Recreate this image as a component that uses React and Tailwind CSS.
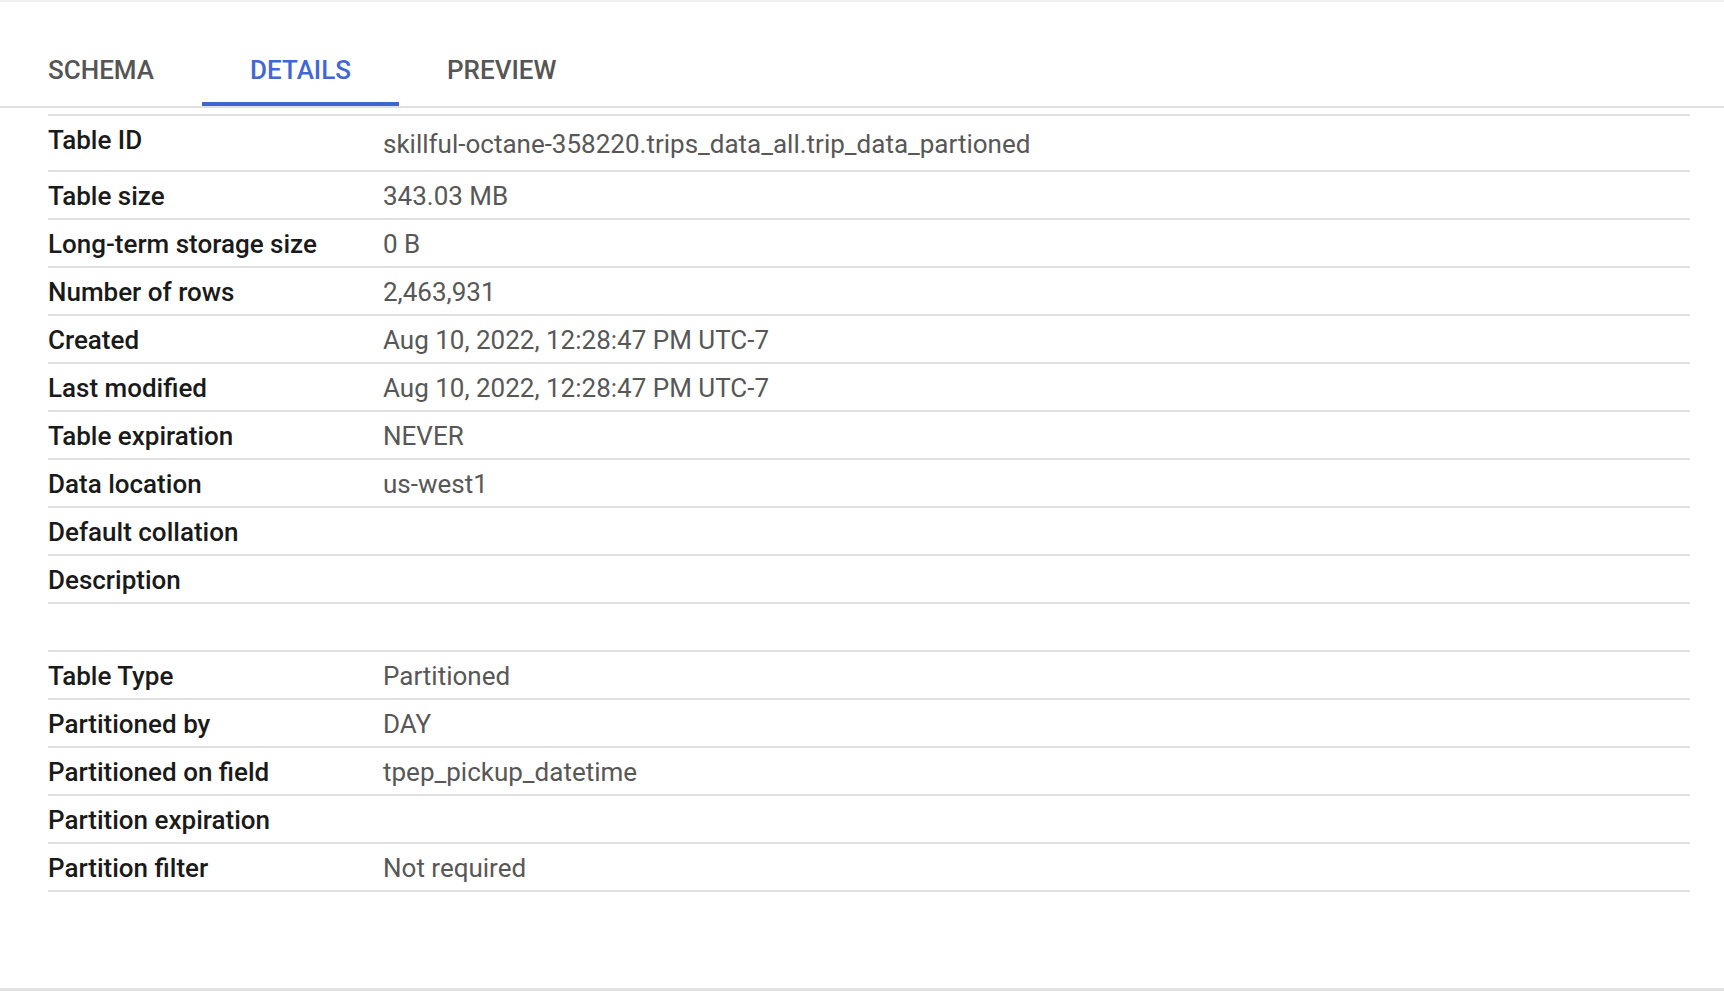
export default function App() {
  const tabs = [
    { label: "SCHEMA", active: false },
    { label: "DETAILS", active: true },
    { label: "PREVIEW", active: false },
  ];

  const rows = [
    { label: "Table ID", value: "skillful-octane-358220.trips_data_all.trip_data_partioned", first: true },
    { label: "Table size", value: "343.03 MB" },
    { label: "Long-term storage size", value: "0 B" },
    { label: "Number of rows", value: "2,463,931" },
    { label: "Created", value: "Aug 10, 2022, 12:28:47 PM UTC-7" },
    { label: "Last modified", value: "Aug 10, 2022, 12:28:47 PM UTC-7" },
    { label: "Table expiration", value: "NEVER" },
    { label: "Data location", value: "us-west1" },
    { label: "Default collation", value: "" },
    { label: "Description", value: "" },
    { label: "", value: "" },
    { label: "Table Type", value: "Partitioned" },
    { label: "Partitioned by", value: "DAY" },
    { label: "Partitioned on field", value: "tpep_pickup_datetime" },
    { label: "Partition expiration", value: "" },
    { label: "Partition filter", value: "Not required" },
  ];

  return (
    <div className="w-[1724px] h-[994px] bg-white font-['Roboto',sans-serif] overflow-hidden flex flex-col">
      <div className="h-[2px] bg-[#efefef]" />

      {/* Tabs */}
      <div className="mt-[32px] flex border-b-2 border-[#e0e0e0]">
        {tabs.map((tab) => (
          <div
            key={tab.label}
            className={`h-[72px] px-[48px] flex items-center justify-center text-[26px] font-medium border-b-4 ${
              tab.active ? "text-[#3f68d6] border-[#3d66d3]" : "text-[#555555] border-transparent"
            }`}
          >
            <span className="pt-[4px]">{tab.label}</span>
          </div>
        ))}
      </div>

      {/* Details table */}
      <div className="mt-[6px] ml-[48px] w-[1642px] border-t-2 border-[#e0e0e0]">
        {rows.map((row, i) => (
          <div
            key={i}
            className={`flex items-center border-b-2 border-[#e0e0e0] leading-[30px] ${row.first ? "h-[56px]" : "h-[48px]"}`}
          >
            <div
              className={`w-[335px] shrink-0 text-[26px] font-medium text-[#1a1a1a] ${row.first ? "mb-[6px]" : "pt-[2px]"}`}
            >
              {row.label}
            </div>
            <div className="text-[26px] text-[#575757] pt-[2px]">{row.value}</div>
          </div>
        ))}
      </div>

      <div className="flex-1" />
      <div className="h-[3px] bg-[#e3e3e3] mb-[3px]" />
    </div>
  );
}
